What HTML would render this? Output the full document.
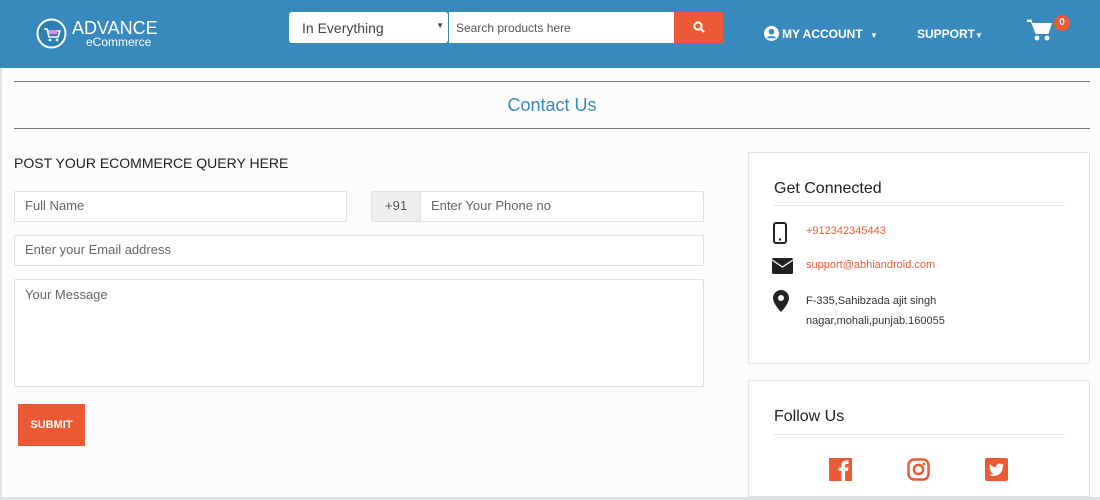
<!DOCTYPE html>
<html><head><meta charset="utf-8"><style>
*{box-sizing:border-box;margin:0;padding:0}
html,body{width:1100px;height:500px;overflow:hidden}
body{background:#fcfcfc;font-family:"Liberation Sans",sans-serif;position:relative}
.hdr{position:absolute;left:0;top:0;width:1100px;height:68px;background:#388abd}
.abs{position:absolute}
.inp{position:absolute;background:#fff;border:1px solid #dcdfe3;border-radius:2px;font-size:13px;color:#666;padding-left:10px;line-height:28px}
.box{position:absolute;background:#fff;border:1px solid #e3e3e3}
</style></head><body>
<div class="hdr">
  <svg class="abs" style="left:36px;top:18px" width="31" height="31" viewBox="0 0 31 31"><circle cx="15.5" cy="15.5" r="14" fill="#2a7fb5" stroke="#fff" stroke-width="2"/><path d="M8 11h3l2 8h9l2-6H12" fill="none" stroke="#fff" stroke-width="1.6"/><rect x="13" y="12" width="8" height="4" fill="#e8d"/><circle cx="14" cy="22" r="1.4" fill="#fff"/><circle cx="21" cy="22" r="1.4" fill="#fff"/></svg>
  <div class="abs" style="left:72px;top:18px;color:#fff;font-size:18px;line-height:20px">ADVANCE</div>
  <div class="abs" style="left:86px;top:35px;color:#fff;font-size:12px">eCommerce</div>
  <div class="abs" style="left:289px;top:12px;width:159px;height:31px;background:#fff;border-radius:3px;font-size:14px;color:#444;padding:8px 13px">In Everything<span style="position:absolute;right:4px;top:9px;font-size:8px">▼</span></div>
  <div class="abs" style="left:449px;top:12px;width:226px;height:31px;background:#fff;font-size:12px;color:#555;padding:9px 7px">Search products here</div>
  <div class="abs" style="left:674px;top:12px;width:49px;height:31px;background:#ec5a35"><svg class="abs" style="left:19px;top:9px" width="12" height="12" viewBox="0 0 12 12"><circle cx="5" cy="5" r="3.6" fill="none" stroke="#fff" stroke-width="2"/><path d="M7.5 7.5L11 11" stroke="#fff" stroke-width="2.2"/></svg></div>
  <svg class="abs" style="left:764px;top:26px" width="15" height="15" viewBox="0 0 16 16"><circle cx="8" cy="8" r="8" fill="#fff"/><circle cx="8" cy="6" r="3" fill="#388abd"/><path d="M3 13c1-3 9-3 10 0" fill="#388abd"/></svg>
  <div class="abs" style="left:782px;top:27px;color:#fff;font-size:12px;font-weight:bold">MY ACCOUNT <span style="font-size:8px;margin-left:4px">▼</span></div>
  <div class="abs" style="left:917px;top:27px;color:#fff;font-size:12px;font-weight:bold">SUPPORT<span style="font-size:8px">▼</span></div>
  <svg class="abs" style="left:1027px;top:19px" width="25" height="22" viewBox="0 0 25 22"><path d="M0 0.5h4.5l1 3.5H25l-3.5 11H8.5L4 3H0z" fill="#fff"/><circle cx="10" cy="19" r="2.4" fill="#fff"/><circle cx="20" cy="19" r="2.4" fill="#fff"/></svg>
  <div class="abs" style="left:1054px;top:15px;width:16px;height:16px;border-radius:50%;background:#ec5a35;color:#fff;font-size:10px;font-weight:bold;text-align:center;line-height:16px">0</div>
</div>
<div class="abs" style="left:0;top:68px;width:2px;height:432px;background:#e0e3e6"></div>
<div class="abs" style="left:14px;top:81px;width:1076px;height:1px;background:#777"></div>
<div class="abs" style="left:14px;top:128px;width:1076px;height:1px;background:#777"></div>
<div class="abs" style="left:0;top:95px;width:1104px;text-align:center;color:#388abd;font-size:18px">Contact Us</div>
<div class="abs" style="left:14px;top:155px;font-size:14px;color:#222">POST YOUR ECOMMERCE QUERY HERE</div>
<div class="inp" style="left:14px;top:191px;width:333px;height:31px">Full Name</div>
<div class="inp" style="left:371px;top:191px;width:50px;height:31px;background:#eceef0;padding-left:13px;color:#555">+91</div>
<div class="inp" style="left:420px;top:191px;width:284px;height:31px">Enter Your Phone no</div>
<div class="inp" style="left:14px;top:235px;width:690px;height:31px">Enter your Email address</div>
<div class="inp" style="left:14px;top:279px;width:690px;height:108px;line-height:30px">Your Message</div>
<div class="abs" style="left:18px;top:404px;width:67px;height:42px;background:#ec5a35;color:#fff;font-size:11px;font-weight:bold;text-align:center;line-height:42px">SUBMIT</div>
<div class="box" style="left:748px;top:152px;width:342px;height:212px">
  <div class="abs" style="left:25px;top:27px;font-size:16px;color:#222">Get Connected</div>
  <div class="abs" style="left:25px;top:52px;width:291px;height:1px;background:#e3e3e3"></div>
  <svg class="abs" style="left:24px;top:69px" width="14" height="22" viewBox="0 0 14 22"><rect x="1" y="1" width="12" height="20" rx="2" fill="none" stroke="#222" stroke-width="2"/><circle cx="7" cy="17.5" r="1.2" fill="#222"/></svg>
  <div class="abs" style="left:57px;top:72px;font-size:11px;color:#ec5a35">+912342345443</div>
  <svg class="abs" style="left:23px;top:105px" width="21" height="16" viewBox="0 0 21 16"><rect x="0" y="0" width="21" height="16" rx="1.5" fill="#222"/><path d="M0 2l10.5 7L21 2" fill="none" stroke="#fff" stroke-width="1.3"/></svg>
  <div class="abs" style="left:57px;top:106px;font-size:11px;color:#ec5a35">support@abhiandroid.com</div>
  <svg class="abs" style="left:24px;top:137px" width="16" height="22" viewBox="0 0 16 22"><path d="M8 0a8 8 0 0 0-8 8c0 6 8 14 8 14s8-8 8-14a8 8 0 0 0-8-8z" fill="#222"/><circle cx="8" cy="8" r="3" fill="#fff"/></svg>
  <div class="abs" style="left:57px;top:138px;font-size:11px;color:#333;line-height:20px">F-335,Sahibzada ajit singh<br>nagar,mohali,punjab.160055</div>
</div>
<div class="box" style="left:748px;top:380px;width:342px;height:117px">
  <div class="abs" style="left:25px;top:27px;font-size:16px;color:#222">Follow Us</div>
  <div class="abs" style="left:25px;top:53px;width:291px;height:1px;background:#e3e3e3"></div>
  <svg class="abs" style="left:80px;top:77px" width="23" height="23" viewBox="0 0 23 23"><rect width="23" height="23" fill="#ec5a35"/><path d="M12.5 23V13h-3V9.5h3V7c0-3 2-4.5 4.5-4.5h2.5V6h-2c-1 0-1.5.5-1.5 1.5v2h3.5l-.5 3.5h-3V23z" fill="#fff"/></svg>
  <svg class="abs" style="left:158px;top:77px" width="23" height="23" viewBox="0 0 23 23"><rect x="1.5" y="1.5" width="20" height="20" rx="5.5" fill="none" stroke="#ec5a35" stroke-width="2.5"/><circle cx="11.5" cy="11.5" r="4.6" fill="none" stroke="#ec5a35" stroke-width="2.5"/><circle cx="17" cy="6" r="1.4" fill="#ec5a35"/></svg>
  <svg class="abs" style="left:236px;top:77px" width="23" height="23" viewBox="0 0 23 23"><rect width="23" height="23" rx="2" fill="#ec5a35"/><path d="M19 7c-.6.3-1.2.4-1.8.5.7-.4 1.1-1 1.4-1.7-.6.4-1.3.6-2 .8A3.1 3.1 0 0 0 11.3 9.4 8.8 8.8 0 0 1 4.9 6.2a3.1 3.1 0 0 0 1 4.2c-.5 0-1-.2-1.4-.4 0 1.5 1.1 2.8 2.5 3.1-.5.1-1 .2-1.4.1.4 1.2 1.6 2.1 2.9 2.2A6.3 6.3 0 0 1 4 16.6a8.8 8.8 0 0 0 13.6-7.9c.6-.4 1.1-1 1.4-1.7z" fill="#fff"/></svg>
</div>
<div class="abs" style="left:0;top:497px;width:1100px;height:3px;background:#e0e3e6"></div>
</body></html>
